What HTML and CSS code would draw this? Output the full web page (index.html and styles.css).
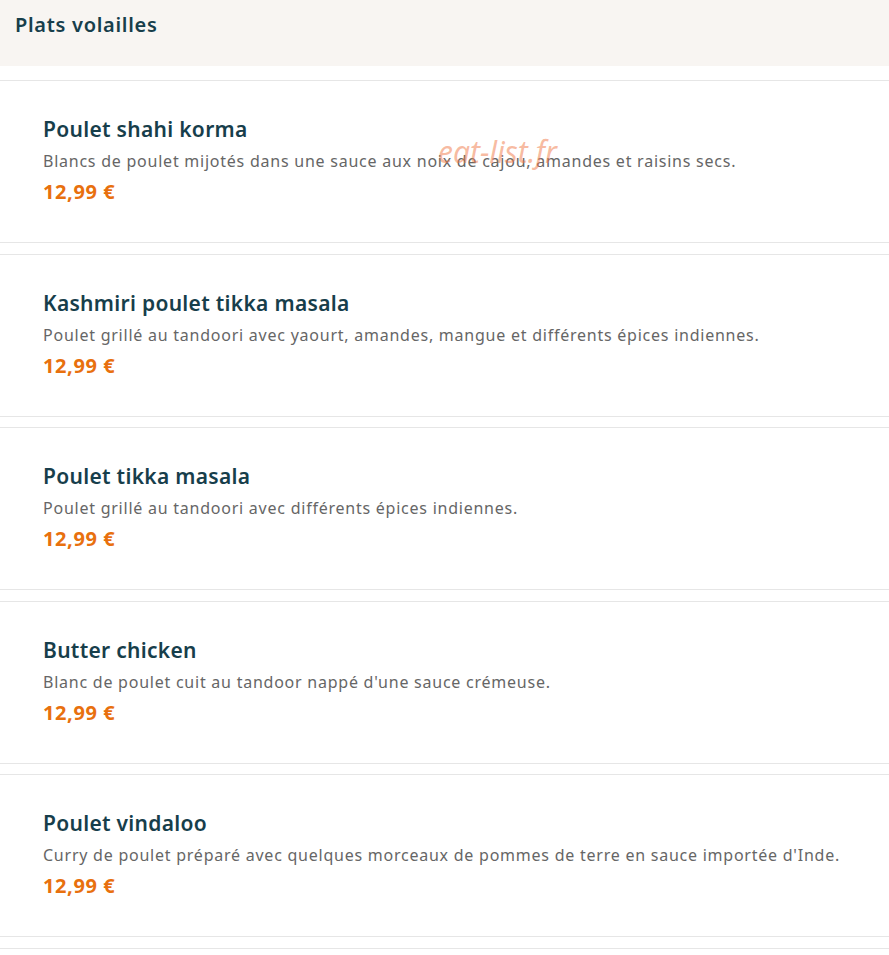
FILE: index.html
```html
<!DOCTYPE html>
<html lang="fr">

<head>
    <meta charset="UTF-8">
    <meta name="viewport" content="width=device-width, initial-scale=1.0">
    <title>Plats volailles</title>
    <link rel="stylesheet" href="styles.css">
</head>

<body>
    <div class="category-header">
        <h2>Plats volailles</h2>
    </div>

    <div class="menu-list">
        <div class="menu-item">
            <h3>Poulet shahi korma</h3>
            <p class="description">Blancs de poulet mijotés dans une sauce aux noix de cajou, amandes et raisins secs.</p>
            <p class="price">12,99 €</p>
            <span class="watermark">eat-list.fr</span>
        </div>

        <div class="menu-item">
            <h3>Kashmiri poulet tikka masala</h3>
            <p class="description">Poulet grillé au tandoori avec yaourt, amandes, mangue et différents épices indiennes.</p>
            <p class="price">12,99 €</p>
        </div>

        <div class="menu-item">
            <h3>Poulet tikka masala</h3>
            <p class="description">Poulet grillé au tandoori avec différents épices indiennes.</p>
            <p class="price">12,99 €</p>
        </div>

        <div class="menu-item">
            <h3>Butter chicken</h3>
            <p class="description">Blanc de poulet cuit au tandoor nappé d'une sauce crémeuse.</p>
            <p class="price">12,99 €</p>
        </div>

        <div class="menu-item">
            <h3>Poulet vindaloo</h3>
            <p class="description">Curry de poulet préparé avec quelques morceaux de pommes de terre en sauce importée d'Inde.</p>
            <p class="price">12,99 €</p>
        </div>

        <div class="menu-item"></div>
    </div>
</body>

</html>
```

FILE: styles.css
```css
body {
    font-family: "Noto Sans", Arial, sans-serif;
    margin: 0;
    background-color: #fff;
}

.category-header {
    background-color: #f8f5f2;
    height: 66px;
    padding: 0 15px;
    box-sizing: border-box;
}

.category-header h2 {
    margin: 0;
    padding-top: 12px;
    font-size: 20px;
    line-height: 26px;
    font-weight: 600;
    letter-spacing: 0.7px;
    color: #173e4b;
}

.menu-list {
    display: flex;
    flex-direction: column;
    gap: 10.5px;
    padding-top: 14px;
}

.menu-item {
    position: relative;
    border-top: 1px solid #e6e6e6;
    border-bottom: 1px solid #e6e6e6;
    padding: 36px 43px 37px;
}

.menu-item:empty {
    height: 4px;
    padding: 0;
    border-bottom: none;
}

.menu-item h3 {
    margin: 0 0 9px;
    font-size: 21px;
    line-height: 24px;
    font-weight: 600;
    letter-spacing: 0.3px;
    color: #173e4b;
}

.description {
    margin: 0 0 7px;
    font-size: 16px;
    line-height: 22px;
    letter-spacing: 0.76px;
    color: #666;
}

.price {
    margin: 0;
    font-size: 20px;
    line-height: 26px;
    font-weight: 700;
    letter-spacing: 0.6px;
    color: #e8700e;
}

.watermark {
    position: absolute;
    left: 438px;
    top: 50px;
    font-size: 30px;
    font-style: italic;
    color: rgba(240, 120, 70, 0.5);
}
```
